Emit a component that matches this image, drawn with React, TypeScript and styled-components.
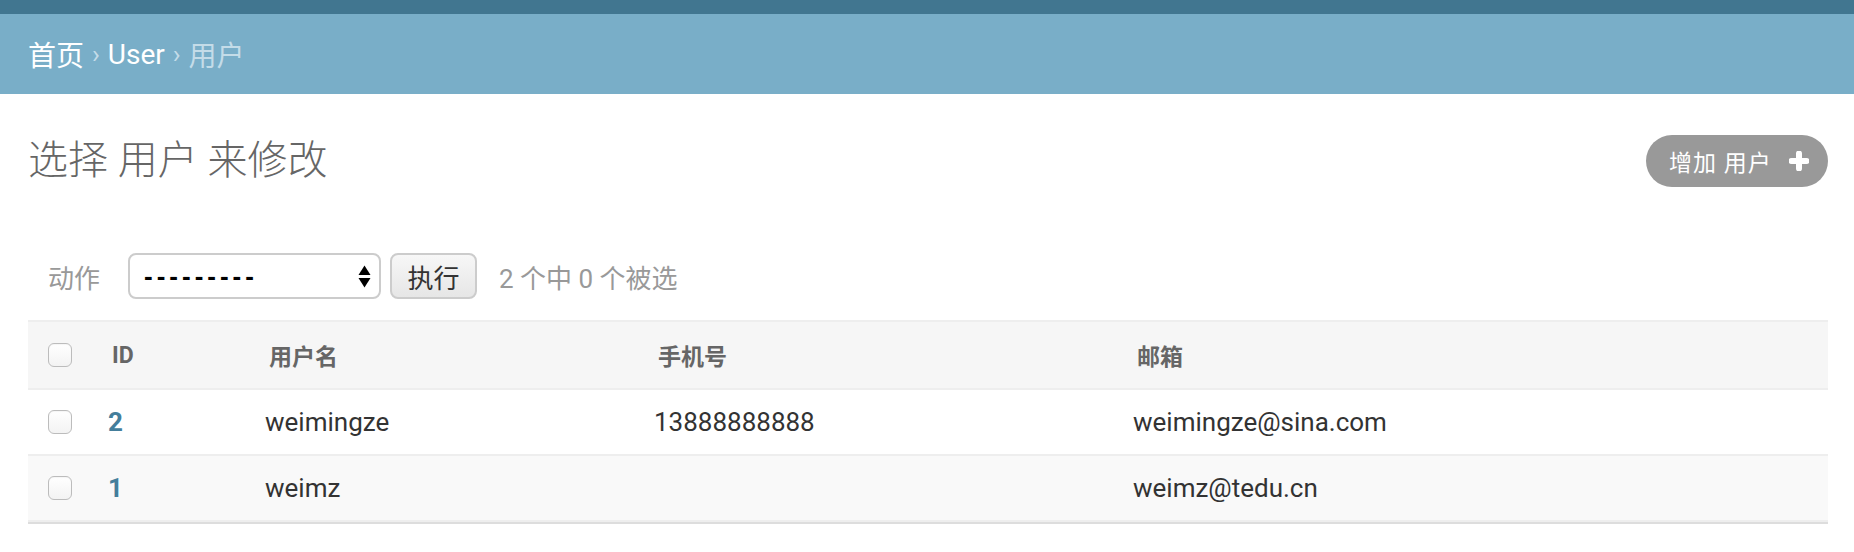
import React from "react";
import styled, { createGlobalStyle } from "styled-components";

const GlobalStyle = createGlobalStyle`
  *, *::before, *::after { box-sizing: border-box; }
  html, body { margin: 0; padding: 0; background: #fff; }
  body {
    font-family: Roboto, "Noto Sans CJK SC", "Noto Sans", sans-serif;
    color: #333;
  }
`;

const FONT = `Roboto, "Noto Sans CJK SC", sans-serif`;

const Page = styled.div`
  width: 1854px;
  min-height: 552px;
  background: #fff;
`;

const TopBar = styled.div`
  height: 14px;
  background: #417690;
`;

const Breadcrumbs = styled.nav`
  height: 80px;
  background: #79aec8;
  padding: 0 28px;
  display: flex;
  align-items: center;
  gap: 8px;
  font-family: ${FONT};
  font-size: 28px;
  color: #c4dce8;
`;

const Crumb = styled.a`
  color: #fff;
  text-decoration: none;
`;

const Sep = styled.span`
  color: #c4dce8;
  font-size: 26px;
`;

const Current = styled.span`
  color: #c4dce8;
`;

const Content = styled.main`
  padding: 41px 26px 0 28px;
`;

const TitleRow = styled.div`
  height: 52px;
  display: flex;
  align-items: center;
  justify-content: space-between;
`;

const Title = styled.h1`
  margin: 0;
  font-family: ${FONT};
  font-size: 40px;
  font-weight: 300;
  line-height: 48px;
  color: #666;
`;

const AddButton = styled.a`
  height: 52px;
  width: 182px;
  border-radius: 26px;
  background: #999;
  color: #fff;
  text-decoration: none;
  display: flex;
  align-items: center;
  padding: 0 17px 0 23px;
  gap: 17px;
  font-family: ${FONT};
  font-size: 23px;
  letter-spacing: 1px;
`;

const ActionsBar = styled.div`
  margin-top: 66px;
  height: 46px;
  padding-left: 20px;
  display: flex;
  align-items: center;
  font-family: ${FONT};
  font-size: 26px;
`;

const ActionLabel = styled.label`
  color: #999;
  margin-right: 28px;
`;

const SelectWrap = styled.div`
  position: relative;
  width: 253px;
  height: 46px;
`;

const Select = styled.select`
  appearance: none;
  -webkit-appearance: none;
  width: 100%;
  height: 100%;
  border: 2px solid #ccc;
  border-radius: 8px;
  background: #fff;
  padding: 0 0 0 14px;
  font-family: "Liberation Sans", Arial, sans-serif;
  font-size: 26px;
  font-weight: 700;
  letter-spacing: 4px;
  color: #000;
  outline: none;
`;

const SelectArrows = styled.svg`
  position: absolute;
  right: 10px;
  top: 12px;
  pointer-events: none;
`;

const GoButton = styled.button`
  margin-left: 9px;
  width: 87px;
  height: 46px;
  border: 2px solid #ccc;
  border-radius: 8px;
  background: linear-gradient(#f7f7f7, #e6e6e6);
  font-family: ${FONT};
  font-size: 26px;
  color: #333;
  padding: 0;
  cursor: pointer;
`;

const Counter = styled.span`
  margin-left: 22px;
  color: #999;
`;

const Results = styled.div`
  margin-top: 21px;
  width: 1800px;
  border-bottom: 2px solid #ddd;
  font-family: ${FONT};
`;

const COLS = "64px 157px 389px 479px 1fr";

const HeadRow = styled.div`
  display: grid;
  grid-template-columns: ${COLS};
  align-items: center;
  height: 70px;
  background: #f6f6f6;
  border-top: 2px solid #eee;
  border-bottom: 2px solid #eee;
`;

const HeadCell = styled.div`
  padding-left: 20px;
  font-size: 23px;
  font-weight: 700;
  color: #666;
`;

const Row = styled.div<{ $alt?: boolean }>`
  display: grid;
  grid-template-columns: ${COLS};
  align-items: center;
  height: 66px;
  background: ${(p) => (p.$alt ? "#f9f9f9" : "#fff")};
  border-bottom: 2px solid #eee;
`;

const Cell = styled.div`
  padding-left: 16px;
  font-size: 26px;
  color: #333;
`;

const CheckCell = styled.div`
  padding-left: 20px;
  display: flex;
  align-items: center;
`;

const IdLink = styled.a`
  color: #447e9b;
  font-weight: 700;
  text-decoration: none;
`;

const Checkbox = styled.span`
  display: inline-block;
  width: 24px;
  height: 24px;
  border: 1.5px solid #bcbcbc;
  border-radius: 6px;
  background: linear-gradient(#fff, #f3f3f3);
  box-shadow: inset 0 1px 1px rgba(0, 0, 0, 0.04);
`;

const Plus = () => (
  <svg width="20" height="20" viewBox="0 0 20 20" aria-hidden="true">
    <path d="M10 2.5v15M2.5 10h15" stroke="#fff" strokeWidth="6" strokeLinecap="round" />
  </svg>
);

const users = [
  { id: 2, name: "weimingze", phone: "13888888888", email: "weimingze@sina.com" },
  { id: 1, name: "weimz", phone: "", email: "weimz@tedu.cn" },
];

export default function App() {
  return (
    <Page>
      <GlobalStyle />
      <TopBar />
      <Breadcrumbs>
        <Crumb href="#">首页</Crumb>
        <Sep>›</Sep>
        <Crumb href="#">User</Crumb>
        <Sep>›</Sep>
        <Current>用户</Current>
      </Breadcrumbs>
      <Content>
        <TitleRow>
          <Title>选择 用户 来修改</Title>
          <AddButton href="#">
            增加 用户
            <Plus />
          </AddButton>
        </TitleRow>
        <ActionsBar>
          <ActionLabel>动作</ActionLabel>
          <SelectWrap>
            <Select defaultValue="">
              <option value="">---------</option>
              <option value="delete">删除所选的 用户</option>
            </Select>
            <SelectArrows width="13" height="23" viewBox="0 0 13 23">
              <path d="M6.5 0.5L12.5 10H0.5Z" fill="#000" />
              <path d="M6.5 22.5L12.5 13H0.5Z" fill="#000" />
            </SelectArrows>
          </SelectWrap>
          <GoButton type="button">执行</GoButton>
          <Counter>2 个中 0 个被选</Counter>
        </ActionsBar>
        <Results>
          <HeadRow>
            <CheckCell>
              <Checkbox />
            </CheckCell>
            <HeadCell>ID</HeadCell>
            <HeadCell>用户名</HeadCell>
            <HeadCell>手机号</HeadCell>
            <HeadCell>邮箱</HeadCell>
          </HeadRow>
          {users.map((u, i) => (
            <Row key={u.id} $alt={i % 2 === 1}>
              <CheckCell>
                <Checkbox />
              </CheckCell>
              <Cell>
                <IdLink href="#">{u.id}</IdLink>
              </Cell>
              <Cell>{u.name}</Cell>
              <Cell>{u.phone}</Cell>
              <Cell>{u.email}</Cell>
            </Row>
          ))}
        </Results>
      </Content>
    </Page>
  );
}
